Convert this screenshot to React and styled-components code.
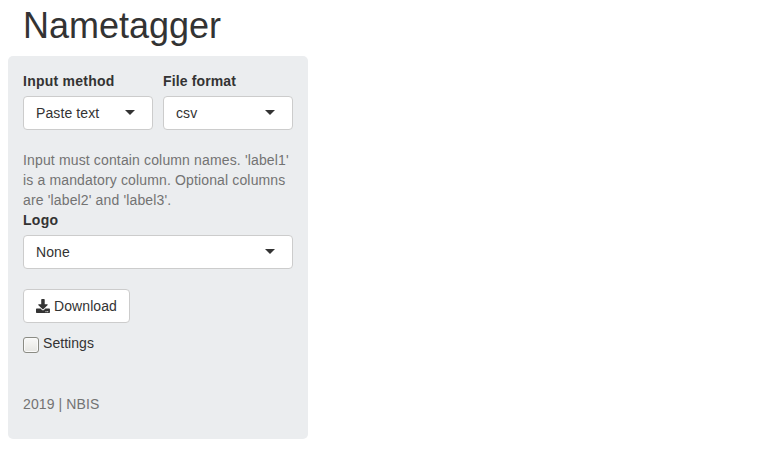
import React from "react";
import styled, { createGlobalStyle } from "styled-components";
import { FaDownload } from "react-icons/fa";

const GlobalStyle = createGlobalStyle`
  *, *::before, *::after { box-sizing: border-box; }
  body {
    margin: 0;
    background: #fff;
    color: #333;
    font: 14px/20px "Liberation Sans", Arial, sans-serif;
  }
`;

const Page = styled.main`
  padding: 6px 8px 0;
`;

const Title = styled.h1`
  margin: 0 0 10px 15px;
  height: 40px;
  font-size: 36px;
  font-weight: 400;
  line-height: 40px;
`;

const Panel = styled.section`
  width: 300px;
  height: 383px;
  padding: 15px;
  border-radius: 5px;
  background: #ebedef;
  letter-spacing: 0.1px;
`;

const FieldRow = styled.div`
  display: grid;
  grid-template-columns: 1fr 1fr;
  gap: 10px;
  margin-bottom: 20px;
`;

const Field = styled.div`
  display: flex;
  flex-direction: column;
  gap: 5px;
`;

const Label = styled.span`
  font-weight: 700;
  letter-spacing: ${({ $tracking }) => $tracking};
`;

const Select = styled.button`
  display: flex;
  align-items: center;
  justify-content: space-between;
  width: 100%;
  height: 34px;
  padding: 0 17px 0 12px;
  border: 1px solid #ccc;
  border-radius: 4px;
  background: #fff;
  color: inherit;
  font: inherit;
  letter-spacing: 0.1px;
`;

const Caret = styled.i`
  margin-bottom: 2px;
  border: 5px solid transparent;
  border-top-color: #333;
  border-bottom: 0;
`;

const Help = styled.p`
  margin: 0;
  color: #737373;
  letter-spacing: 0.145px;
  white-space: nowrap;
`;

const DownloadButton = styled.button`
  display: flex;
  align-items: center;
  gap: 4px;
  width: 107px;
  height: 34px;
  margin: 20px 0 10px;
  padding: 0 12px;
  border: 1px solid #ccc;
  border-radius: 4px;
  background: #fff;
  color: inherit;
  font: inherit;
  letter-spacing: 0.1px;
`;

const CheckLabel = styled.label`
  display: flex;
  gap: 4px;
  height: 20px;
  letter-spacing: 0.05px;
`;

const Checkbox = styled.input`
  appearance: none;
  width: 16px;
  height: 16px;
  margin: 4px 0 0;
  border: 1px solid #8b8c84;
  border-radius: 3px;
  background: linear-gradient(#f9f9f8, #e6e6e2);
  box-shadow: inset 0 0 0 1px #fafafa;
`;

const Footer = styled.footer`
  margin-top: 41px;
  color: #737373;
`;

function SelectField({ label, value, tracking = "0.3px" }) {
  return (
    <Field>
      <Label $tracking={tracking}>{label}</Label>
      <Select type="button">
        {value}
        <Caret />
      </Select>
    </Field>
  );
}

export default function App() {
  return (
    <>
      <GlobalStyle />
      <Page>
        <Title>Nametagger</Title>
        <Panel>
          <FieldRow>
            <SelectField label="Input method" value="Paste text" tracking="0.25px" />
            <SelectField label="File format" value="csv" tracking="0.13px" />
          </FieldRow>
          <Help>
            Input must contain column names. 'label1'
            <br />
            is a mandatory column. Optional columns
            <br />
            are 'label2' and 'label3'.
          </Help>
          <SelectField label="Logo" value="None" />
          <DownloadButton type="button">
            <FaDownload size={14} />
            Download
          </DownloadButton>
          <CheckLabel>
            <Checkbox type="checkbox" />
            Settings
          </CheckLabel>
          <Footer>2019 | NBIS</Footer>
        </Panel>
      </Page>
    </>
  );
}
